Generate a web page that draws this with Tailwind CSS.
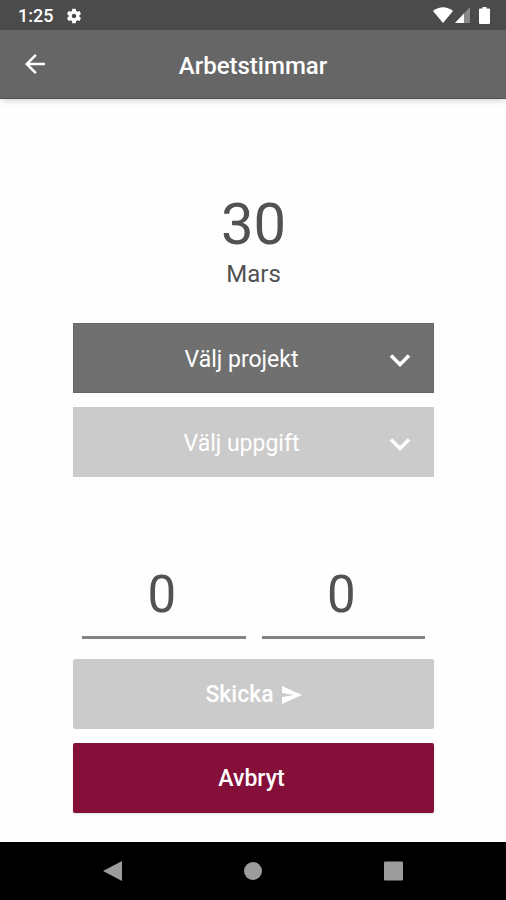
<!DOCTYPE html>
<html lang="sv">
<head>
<meta charset="utf-8">
<meta name="viewport" content="width=device-width, initial-scale=1">
<title>Arbetstimmar</title>
<script src="https://cdn.jsdelivr.net/npm/@tailwindcss/browser@4"></script>
</head>
<body class="flex min-h-screen flex-col bg-[#fefefe] font-['Roboto','Noto_Sans',sans-serif] text-[#525252]">
  <div class="flex h-[30px] items-center justify-between bg-[#4b4b4b] pr-4 pl-[18px] text-white">
    <div class="flex items-center gap-3 pt-px">
      <span class="text-lg leading-6 font-medium">1:25</span>
      <svg class="size-[18px]" viewBox="0 0 24 24" fill="currentColor" aria-hidden="true"><path d="M19.14 12.94c.04-.3.06-.61.06-.94 0-.32-.02-.64-.07-.94l2.03-1.58a.49.49 0 0 0 .12-.61l-1.92-3.32a.488.488 0 0 0-.59-.22l-2.39.96c-.5-.38-1.03-.7-1.62-.94l-.36-2.54a.484.484 0 0 0-.48-.41h-3.84c-.24 0-.43.17-.47.41l-.36 2.54c-.59.24-1.13.57-1.62.94l-2.39-.96c-.22-.08-.47 0-.59.22L2.74 8.87c-.12.21-.08.47.12.61l2.03 1.58c-.05.3-.09.63-.09.94s.02.64.07.94l-2.03 1.58a.49.49 0 0 0-.12.61l1.92 3.32c.12.22.37.29.59.22l2.39-.96c.5.38 1.03.7 1.62.94l.36 2.54c.05.24.24.41.48.41h3.84c.24 0 .44-.17.47-.41l.36-2.54c.59-.24 1.13-.56 1.62-.94l2.39.96c.22.08.47 0 .59-.22l1.92-3.32c.12-.22.07-.47-.12-.61zM12 15a3 3 0 1 1 0-6 3 3 0 0 1 0 6z"/></svg>
    </div>
    <div class="flex items-center">
      <svg class="h-4 w-5" viewBox="0 0 20 16" fill="currentColor" aria-hidden="true"><path d="M0 4Q10-3.500 20 4L10 16Z"/></svg>
      <svg class="ml-[2px] h-4 w-[15px]" viewBox="0 0 15 16" fill="currentColor" aria-hidden="true"><path opacity=".35" d="M15 0V16H0Z"/><path d="M9 6.400V16H0Z"/></svg>
      <svg class="ml-[9px] h-[17px] w-[11px]" viewBox="0 0 11 17" fill="currentColor" aria-hidden="true"><path d="M3.500 0h4v1.500H10a1 1 0 0 1 1 1V16a1 1 0 0 1-1 1H1a1 1 0 0 1-1-1V2.500a1 1 0 0 1 1-1h2.500Z"/></svg>
    </div>
  </div>

  <header class="grid h-[69px] grid-cols-[70px_1fr_70px] items-center border-b border-[#4f4f4f] bg-[#666] text-white shadow-md">
    <button type="button" aria-label="Tillbaka" class="flex h-full items-center justify-center">
      <svg class="size-[30px]" viewBox="0 0 24 24" fill="currentColor" aria-hidden="true"><path d="M20 11H7.830l5.590-5.590L12 4l-8 8 8 8 1.410-1.410L7.830 13H20v-2z"/></svg>
    </button>
    <h1 class="pt-[3px] text-center text-2xl font-medium">Arbetstimmar</h1>
  </header>

  <main class="flex flex-1 flex-col pt-[93px] pr-[72px] pb-[29px] pl-[73px]">
    <div class="text-center">
      <div class="text-[58px] leading-[64px]">30</div>
      <div class="pt-1 text-2xl leading-7">Mars</div>
    </div>

    <form class="flex flex-1 flex-col pt-[35px]">
      <div class="flex flex-col gap-[14px]">
        <div class="relative">
          <select aria-label="Projekt" class="h-[70px] w-full appearance-none border border-[#666] bg-[#707070] pt-1 pr-6 text-center text-[23px] text-white [text-align-last:center]"><option>Välj projekt</option></select>
          <svg class="pointer-events-none absolute top-[22px] right-5 size-7" viewBox="0 0 28 28" fill="none" stroke="white" stroke-width="3.500" aria-hidden="true"><path d="M5 10.500l9 9 9-9"/></svg>
        </div>
        <div class="relative">
          <select aria-label="Uppgift" disabled class="h-[70px] w-full appearance-none bg-[#cbcbcb] pt-1 pr-6 text-center text-[23px] text-white opacity-100 [text-align-last:center]"><option>Välj uppgift</option></select>
          <svg class="pointer-events-none absolute top-[22px] right-5 size-7" viewBox="0 0 28 28" fill="none" stroke="white" stroke-width="3.500" aria-hidden="true"><path d="M5 10.500l9 9 9-9"/></svg>
        </div>
      </div>

      <div class="mt-auto grid grid-cols-2 gap-4 px-[9px] pt-10">
        <input aria-label="Timmar" inputmode="numeric" value="0" class="h-[88px] w-full min-w-0 border-b-3 border-[#828282] bg-transparent pt-px pr-1 text-center text-[51px]">
        <input aria-label="Minuter" inputmode="numeric" value="0" class="h-[88px] w-full min-w-0 border-b-3 border-[#828282] bg-transparent pt-px pr-1 text-center text-[51px]">
      </div>

      <div class="flex flex-col gap-[14px] pt-5">
        <button type="submit" disabled class="flex h-[70px] items-center justify-center gap-2 rounded-xs bg-[#cbcbcb] pt-0.5 text-[23px] font-medium text-white">
          Skicka
          <svg class="h-[18px] w-5" viewBox="0 0 20 18" fill="currentColor" aria-hidden="true"><path d="M0 0L20 9 0 18V11L12 9 0 7Z"/></svg>
        </button>
        <button type="button" class="h-[70px] rounded-xs bg-[#840f39] pt-0.5 pr-1 text-[23px] font-medium text-white shadow">Avbryt</button>
      </div>
    </form>
  </main>

  <nav aria-label="System" class="flex h-[58px] items-center justify-between bg-black px-[103px] text-[#9c9c9c]">
    <button type="button" aria-label="Bakåt"><svg class="size-5" viewBox="0 0 20 20" fill="currentColor"><path d="M19 0V20L0 10Z"/></svg></button>
    <button type="button" aria-label="Hem"><svg class="size-5" viewBox="0 0 20 20" fill="currentColor"><circle cx="10" cy="10" r="9"/></svg></button>
    <button type="button" aria-label="Översikt"><svg class="size-5" viewBox="0 0 20 20" fill="currentColor"><rect x="1" width="19" height="19" y=".5" rx="1"/></svg></button>
  </nav>
</body>
</html>
